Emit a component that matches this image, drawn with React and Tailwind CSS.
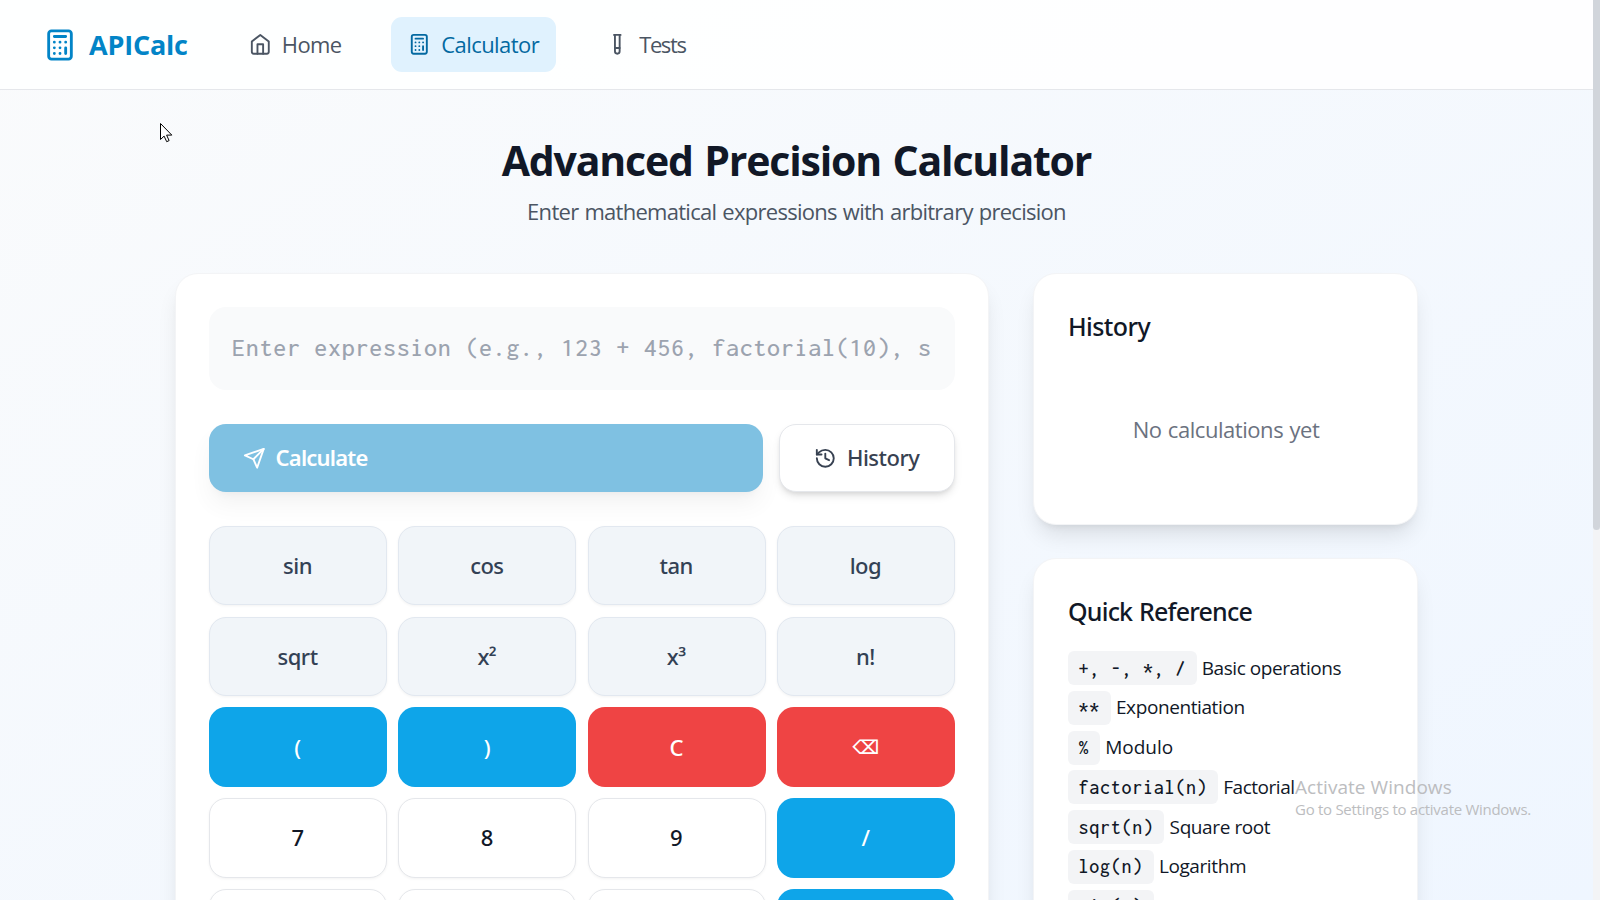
function Icon({ className, children }) {
  return (
    <svg
      viewBox="0 0 24 24"
      fill="none"
      stroke="currentColor"
      strokeWidth="2"
      strokeLinecap="round"
      strokeLinejoin="round"
      className={`shrink-0 ${className}`}
    >
      {children}
    </svg>
  );
}

function CalculatorIcon({ className }) {
  return (
    <Icon className={className}>
      <rect width="16" height="20" x="4" y="2" rx="2" />
      <path d="M8 6h8M16 14v4M16 10h.01M12 10h.01M8 10h.01M12 14h.01M8 14h.01M12 18h.01M8 18h.01" />
    </Icon>
  );
}

function HomeIcon({ className }) {
  return (
    <Icon className={className}>
      <path d="m3 9 9-7 9 7v11a2 2 0 0 1-2 2H5a2 2 0 0 1-2-2z" />
      <path d="M9 22V12h6v10" />
    </Icon>
  );
}

function TestTubeIcon({ className }) {
  return (
    <Icon className={className}>
      <path d="M14.5 2v17.5c0 1.4-1.1 2.5-2.5 2.5s-2.5-1.1-2.5-2.5V2" />
      <path d="M8.5 2h7M14.5 16h-5" />
    </Icon>
  );
}

function SendIcon({ className }) {
  return (
    <Icon className={className}>
      <path d="m22 2-7 20-4-9-9-4Z" />
      <path d="M22 2 11 13" />
    </Icon>
  );
}

function HistoryIcon({ className }) {
  return (
    <Icon className={className}>
      <path d="M3 12a9 9 0 1 0 9-9 9.75 9.75 0 0 0-6.74 2.74L3 8" />
      <path d="M3 3v5h5M12 7v5l4 2" />
    </Icon>
  );
}

const keyStyles = {
  fn: "bg-[#f1f5f9] border border-[#e2e8f0] text-[#334155] shadow-[0_1px_3px_rgba(0,0,0,0.05)]",
  op: "bg-[#0ea5e9] text-white",
  danger: "bg-[#ef4444] text-white",
  num: "bg-white border border-[#e5e7eb] text-[#111827] shadow-[0_1px_3px_rgba(0,0,0,0.05)]",
};

const keys = [
  ["sin", "fn"], ["cos", "fn"], ["tan", "fn"], ["log", "fn"],
  ["sqrt", "fn"], ["x²", "fn"], ["x³", "fn"], ["n!", "fn"],
  ["(", "op"], [")", "op"], ["C", "danger"], ["⌫", "danger"],
  ["7", "num"], ["8", "num"], ["9", "num"], ["/", "op"],
  ["4", "num"], ["5", "num"], ["6", "num"], ["*", "op"],
];

const reference = [
  ["+, -, *, /", "Basic operations", "tracking-[-0.45px]"],
  ["**", "Exponentiation", "tracking-[-0.4px]"],
  ["%", "Modulo", "tracking-[0px]"],
  ["factorial(n)", "Factorial", "tracking-[-0.47px]"],
  ["sqrt(n)", "Square root", "tracking-[-0.4px]"],
  ["log(n)", "Logarithm", "tracking-[-0.4px]"],
  ["sin(n)", "Sine", "tracking-[-0.4px]"],
];

const card =
  "rounded-[23px] border border-[#f3f4f6] bg-white py-[33px] shadow-[0_14px_21px_-4px_rgba(0,0,0,0.1),0_6px_8px_-6px_rgba(0,0,0,0.1)]";

function Header() {
  return (
    <header className="flex h-[90px] shrink-0 items-center border-b border-[#e5e7eb] bg-white/90 pl-[43.3px] text-[22px] leading-[34px] text-[#4b5563]">
      <div className="flex w-[188.3px] items-center gap-[11.7px] text-[#0284c7]">
        <CalculatorIcon className="size-[34px]" />
        <span className="text-[27px] font-bold tracking-[-0.2px]">APICalc</span>
      </div>
      <nav className="flex items-center gap-[33px]">
        <a className="flex h-[55px] w-[126px] items-center gap-[10.6px] pl-[17px]">
          <HomeIcon className="size-[22.6px]" />
          <span className="pb-[2px] tracking-[-0.6px]">Home</span>
        </a>
        <a className="flex h-[55px] w-[165px] items-center gap-[11px] rounded-[11px] bg-[#e0f2fe] pl-[17px] text-[#0369a1]">
          <CalculatorIcon className="size-[22.6px]" />
          <span className="pb-[2px] tracking-[-0.55px]">Calculator</span>
        </a>
        <a className="flex h-[55px] items-center gap-[11px] pl-[17px]">
          <TestTubeIcon className="size-[22.6px]" />
          <span className="pb-[2px] tracking-[-1.4px]">Tests</span>
        </a>
      </nav>
    </header>
  );
}

function CalculatorPanel() {
  return (
    <section className={`w-[814px] shrink-0 self-start px-[33px] ${card}`}>
      <div className="h-[83px] overflow-hidden rounded-[17px] bg-[#f9fafb] px-[23px] font-['Inconsolata','Liberation_Mono',monospace] text-[26px] leading-[81px] font-medium tracking-[0.72px] whitespace-pre text-[#9ca3af]">
        Enter expression (e.g., 123 + 456, factorial(10), s
      </div>
      <div className="mt-[34px] flex gap-[16.4px] text-[22px] leading-[34px]">
        <button className="flex h-[68px] w-[554px] items-center gap-[10px] rounded-[17px] bg-[#0284c7] pl-[34px] font-semibold text-white opacity-50 shadow-[0_14px_21px_-4px_rgba(0,0,0,0.1),0_6px_8px_-6px_rgba(0,0,0,0.1)]">
          <SendIcon className="size-[22.6px]" />
          <span className="pb-[2px] font-['Noto_Sans',sans-serif] tracking-[-0.8px]">Calculate</span>
        </button>
        <button className="flex h-[68px] flex-1 items-center gap-[10.2px] rounded-[17px] border border-[#e5e7eb] bg-white pl-[33.8px] font-[550] text-[#374151] shadow-[0_5px_8px_-1px_rgba(0,0,0,0.1),0_3px_5px_-2px_rgba(0,0,0,0.1)]">
          <HistoryIcon className="size-[22.6px]" />
          <span className="pb-[2px] font-['Noto_Sans',sans-serif] tracking-[-0.5px]">History</span>
        </button>
      </div>
      <div className="mt-[33.8px] grid grid-cols-4 gap-x-[11.2px] gap-y-[11.2px] font-['Noto_Sans','DejaVu_Sans',sans-serif]">
        {keys.map(([label, kind]) => (
          <button
            key={label}
            className={`flex h-[79.6px] items-center justify-center rounded-[17px] pr-px font-[550] tracking-[-0.5px] ${label === "⌫" ? "text-[19px]" : "text-[22px]"} ${keyStyles[kind]}`}
          >
            {label}
          </button>
        ))}
      </div>
    </section>
  );
}

function Sidebar() {
  return (
    <aside className="flex w-[385px] shrink-0 flex-col gap-[33px]">
      <section className={`h-[252px] pr-[33px] pl-[34px] ${card}`}>
        <h2 className="font-['Noto_Sans',sans-serif] text-[25px] leading-[39px] font-medium tracking-[-0.6px] text-[#111827]">
          History
        </h2>
        <p className="mt-[66px] text-center text-[22px] leading-[34px] tracking-[-0.45px] [word-spacing:1px] text-[#6b7280]">
          No calculations yet
        </p>
      </section>
      <section className={`pr-[33px] pl-[34px] ${card}`}>
        <h2 className="font-['Noto_Sans',sans-serif] text-[25px] leading-[39px] font-medium tracking-[-0.8px] [word-spacing:1px] text-[#111827]">
          Quick Reference
        </h2>
        <ul className="mt-[20px] flex flex-col gap-[5.75px] text-[19px] text-[#111827]">
          {reference.map(([code, name, tracking]) => (
            <li key={code} className="flex h-[34px] items-center">
              <code className="flex h-[34px] items-center rounded-[6px] bg-[#f3f4f6] px-[10.6px] pt-px font-['Inconsolata','Liberation_Mono',monospace] text-[20px] font-medium tracking-[0.73px] whitespace-pre">
                {code}
              </code>
              <span className={`ml-[5.3px] pb-px leading-[28px] ${tracking}`}>{name}</span>
            </li>
          ))}
        </ul>
      </section>
    </aside>
  );
}

export default function App() {
  return (
    <div className="relative flex h-[900px] w-full overflow-hidden bg-linear-to-br from-[#fafbfc] to-[#eff6ff] font-['Open_Sans','Noto_Sans',sans-serif]">
      <div className="flex h-full min-w-0 flex-1 flex-col overflow-hidden">
        <Header />
        <main className="flex flex-col items-center pt-[45px]">
          <h1 className="text-[41px] leading-[50px] font-bold tracking-[-1.18px] [word-spacing:2px] text-[#111827]">
            Advanced Precision Calculator
          </h1>
          <p className="mt-[9px] text-[22px] leading-[34px] tracking-[-0.72px] [word-spacing:1px] text-[#4b5563]">
            Enter mathematical expressions with arbitrary precision
          </p>
          <div className="mt-[45px] flex gap-[44px]">
            <CalculatorPanel />
            <Sidebar />
          </div>
        </main>
      </div>
      <div className="h-full w-[7px] shrink-0 bg-[#f3f4f6]">
        <div className="h-[530px] rounded-b-[4px] bg-[#d1d5db]" />
      </div>
      <div className="absolute top-[776px] left-[1295px] whitespace-nowrap text-[#bcbdc0]">
        <div className="text-[19px] leading-[22px] tracking-[0.05px]">Activate Windows</div>
        <div className="mt-px text-[15px] leading-[20px] tracking-[-0.28px]">
          Go to Settings to activate Windows.
        </div>
      </div>
      <svg viewBox="0 0 13 20" className="absolute top-[123px] left-[160px] h-[20px] w-[13px]">
        <path
          d="M.5.5v16l3.6-3.4 2.6 5.6 2.4-1.1-2.5-5.5h5.2z"
          fill="white"
          stroke="black"
          strokeWidth="1"
        />
      </svg>
    </div>
  );
}
